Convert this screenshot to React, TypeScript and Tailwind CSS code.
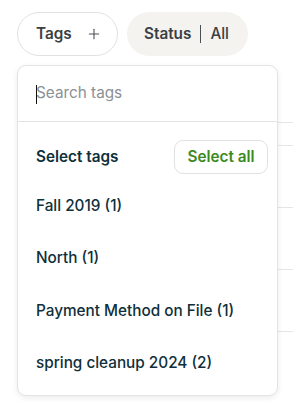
import { Plus } from "lucide-react";

const tags = [
  "Fall 2019 (1)",
  "North (1)",
  "Payment Method on File (1)",
  "spring cleanup 2024 (2)",
];

const bgRows = [23, 62, 62, 62, 62];

export default function App() {
  return (
    <div
      className="relative w-[293px] h-[413px] bg-white overflow-hidden text-[#0f2f3b]"
      style={{ fontFamily: "Inter, 'Noto Sans', sans-serif" }}
    >
      <div className="flex gap-[9px] pl-[17px] pt-[12px]">
        <button className="flex items-center gap-[14px] h-[44px] w-[101px] pl-[18px] rounded-full border border-[#e2e2df] bg-white text-[15.3px] font-semibold text-[#3a3f44]">
          Tags
          <Plus className="w-[16px] h-[16px] text-[#4a4f53]" strokeWidth={1.6} />
        </button>
        <button className="flex items-center h-[44px] w-[121px] pl-[17px] rounded-full bg-[#f4f3f0] text-[15.3px] font-semibold text-[#3a3f44]">
          Status
          <span className="w-px h-[18px] bg-[#4a4f53] ml-[9px] mr-[9px]" />
          <span className="font-medium">All</span>
        </button>
      </div>

      {/* table rows behind the menu */}
      <div className="ml-[17px] mt-[66px]">
        {bgRows.map((h, i) => (
          <div key={i} style={{ height: h }} className="border-t border-[#e6e6e3]" />
        ))}
      </div>

      <div className="absolute left-[17px] top-[65px] w-[261px] h-[331px] rounded-[9px] border border-[#e4e4e1] bg-white shadow-[0_2px_6px_rgba(0,0,0,0.08)]">
        <div className="relative h-[56px] flex items-center px-[18px] border-b border-[#e4e4e1]">
          <span className="absolute left-[18px] top-[19px] w-px h-[19px] bg-[#111]" />
          <input
            className="w-full outline-none bg-transparent text-[15.3px] placeholder:text-[#8b9094] caret-transparent"
            placeholder="Search tags"
          />
        </div>
        <div className="flex items-center justify-between pl-[18px] pr-[9px] pt-[18px] pb-[6px]">
          <span className="text-[15.3px] font-semibold">Select tags</span>
          <button className="h-[34px] w-[94px] rounded-[9px] border border-[#e2e2df] text-[15.3px] font-semibold text-[#3b8a1f]">
            Select all
          </button>
        </div>
        {tags.map((t) => (
          <div key={t} className="h-[52.4px] flex items-center pl-[18px] text-[15.3px] font-medium">
            {t}
          </div>
        ))}
      </div>
    </div>
  );
}
